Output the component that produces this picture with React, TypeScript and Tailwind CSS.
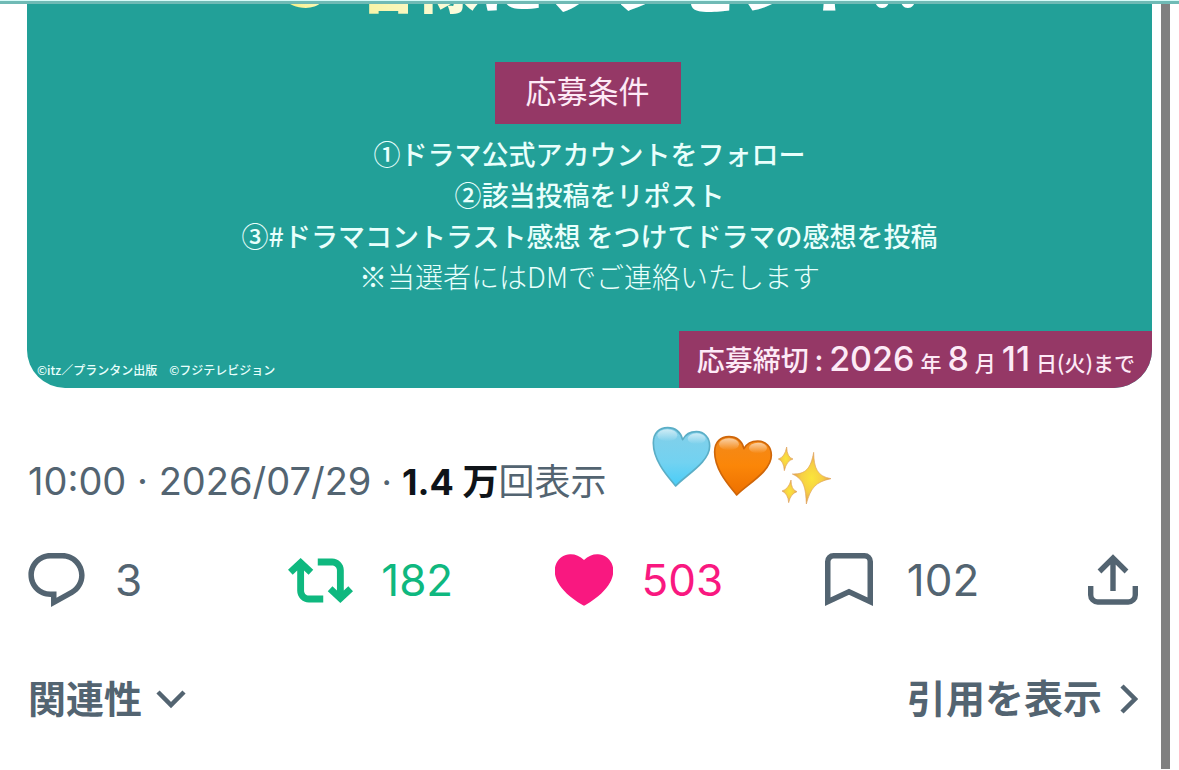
import { clsx } from "clsx";
import type { ReactNode } from "react";

const conditions = [
  "①ドラマ公式アカウントをフォロー",
  "②該当投稿をリポスト",
  "③#ドラマコントラスト感想 をつけてドラマの感想を投稿",
];

function ReplyIcon() {
  return (
    <svg viewBox="1.75 2 20.5 19.7" className="mr-0.5 h-[54px] w-[57px]" fill="currentColor" aria-hidden={true}>
      <path d="M1.751 10c0-4.42 3.584-8 8.005-8h4.366c4.49 0 8.129 3.64 8.129 8.13 0 2.96-1.607 5.68-4.196 7.11l-8.054 4.46v-3.69h-.067c-4.49.1-8.183-3.51-8.183-8.01zm8.005-6c-3.317 0-6.005 2.69-6.005 6 0 3.37 2.77 6.08 6.138 6.01l.351-.01h1.761v2.3l5.087-2.81c1.951-1.08 3.163-3.13 3.163-5.36 0-3.39-2.744-6.13-6.129-6.13H9.756z" />
    </svg>
  );
}

function RepostIcon() {
  return (
    <svg viewBox="0.15 3.79 23.7 16.42" className="h-[45px] w-[65px]" fill="currentColor" aria-hidden={true}>
      <path d="M4.75 3.79l4.603 4.3-1.706 1.82L6 8.38v7.37c0 .97.784 1.75 1.75 1.75H13V20H7.75c-2.347 0-4.25-1.9-4.25-4.25V8.38L1.853 9.91.147 8.09l4.603-4.3zm11.5 2.71H11V4h5.25c2.347 0 4.25 1.9 4.25 4.25v7.37l1.647-1.53 1.706 1.82-4.603 4.3-4.603-4.3 1.706-1.82L18 15.62V8.25c0-.97-.784-1.75-1.75-1.75z" />
    </svg>
  );
}

function LikeIcon() {
  return (
    <svg viewBox="2.1 3.5 19.8 17.66" className="h-[52px] w-[58px]" fill="currentColor" aria-hidden={true}>
      <path d="M20.884 13.19c-1.351 2.48-4.001 5.12-8.379 7.67l-.503.3-.504-.3c-4.379-2.55-7.029-5.19-8.382-7.67-1.36-2.5-1.41-4.86-.514-6.67.887-1.79 2.647-2.91 4.601-3.01 1.651-.09 3.368.56 4.798 2.01 1.429-1.45 3.146-2.1 4.796-2.01 1.954.1 3.714 1.22 4.601 3.01.896 1.81.846 4.17-.514 6.67z" />
    </svg>
  );
}

function BookmarkIcon() {
  return (
    <svg viewBox="0 0 48 54" className="mr-1.5 h-[54px] w-12" fill="none" stroke="currentColor" strokeWidth="5.5" aria-hidden={true}>
      <path d="M2.75 48.7V8.5a5.75 5.75 0 0 1 5.75-5.75h31a5.75 5.75 0 0 1 5.75 5.75v40.2L24 38.8z" />
    </svg>
  );
}

function ShareIcon() {
  return (
    <svg viewBox="0 0 50 52" className="h-[52px] w-[50px]" fill="none" stroke="currentColor" strokeWidth="5.4" aria-hidden={true}>
      <path d="M2.7 32v9a7 7 0 0 0 7 7h30.6a7 7 0 0 0 7-7v-9M25 37V4M11.500 17.500 25 4l13.500 13.500" />
    </svg>
  );
}

function HeartsAndSparkles() {
  return (
    <svg viewBox="0 0 600 285" className="h-[95px] w-[200px] shrink-0" role="img" aria-label="🩵🧡✨">
      <defs>
        <linearGradient id="blueHeart" x1="0" y1="0" x2="0" y2="1">
          <stop offset="0" stopColor="#84cfe8" />
          <stop offset="0.6" stopColor="#72d2f1" />
          <stop offset="1" stopColor="#48cdf8" />
        </linearGradient>
        <linearGradient id="orangeHeart" x1="0" y1="0" x2="0" y2="1">
          <stop offset="0" stopColor="#f28a1c" />
          <stop offset="0.5" stopColor="#fb8608" />
          <stop offset="1" stopColor="#ed7000" />
        </linearGradient>
        <linearGradient id="shine" x1="0" y1="0" x2="0" y2="1">
          <stop offset="0" stopColor="#fff" stopOpacity="0.6" />
          <stop offset="1" stopColor="#fff" stopOpacity="0" />
        </linearGradient>
        <radialGradient id="sparkle">
          <stop offset="0" stopColor="#fbe53a" />
          <stop offset="0.55" stopColor="#f6cf45" />
          <stop offset="1" stopColor="#e2a050" />
        </radialGradient>
      </defs>
      <g strokeWidth="5" strokeLinejoin="round">
        <path d="M107 213C86 187 40 139 40 84C40 53 59 38 83 38C107 38 122 52 128 74C136 59 151 50 169 50C193 50 209 68 209 93C209 142 136 181 107 213Z" fill="url(#blueHeart)" stroke="#5baec6" />
        <path d="M290 240C270 214 224 166 224 111C224 80 243 65 267 65C291 65 306 79 312 101C320 86 335 78 353 78C378 78 394 96 394 121C394 170 320 208 290 240Z" fill="url(#orangeHeart)" stroke="#cf6609" />
      </g>
      <g fill="url(#shine)">
        <ellipse cx="82" cy="61" rx="30" ry="18" />
        <ellipse cx="170" cy="71" rx="27" ry="16" />
        <ellipse cx="267" cy="88" rx="30" ry="18" />
        <ellipse cx="354" cy="99" rx="27" ry="16" />
      </g>
      <g fill="url(#sparkle)" stroke="#dfa35c" strokeWidth="2" strokeLinejoin="round">
        <path d="M440 96Q441 127 459 132Q440 137 433 167Q431 138 415 132Q434 127 440 96Z" />
        <path d="M453 195Q453 224 471 230Q452 236 446 263Q444 236 426 228Q446 222 453 195Z" />
        <path d="M521 112C522 160 532 184 573 191C525 201 512 220 499 267C497 219 493 193 457 177C498 178 512 160 521 112Z" />
      </g>
    </svg>
  );
}

function Action({
  label,
  count,
  className,
  children,
}: {
  label: string;
  count?: string;
  className?: string;
  children: ReactNode;
}) {
  return (
    <button
      type="button"
      aria-label={count ? `${label} ${count}` : label}
      className={clsx("flex h-14 items-center gap-7 text-[44px] leading-none", className)}
    >
      {children}
      {count && <span>{count}</span>}
    </button>
  );
}

function CampaignCard() {
  return (
    <section className="flex flex-col overflow-hidden rounded-b-[38px] bg-[#22a098] font-['Noto_Sans_CJK_JP',sans-serif] text-[#e9fffc]">
      <div className="flex h-[17px] items-end justify-center overflow-hidden pl-6">
        <p className="whitespace-nowrap text-[65px] font-black leading-[84px] text-white">
          <span className="mr-4 bg-linear-to-r from-[#f5ee7c] to-[#fdfbc8] bg-clip-text text-[84px] text-transparent">
            5
          </span>
          <span className="bg-linear-to-r from-[#f7f29a] to-[#fdfde8] bg-clip-text text-transparent">
            名様
          </span>
          にプレゼント!!
        </p>
      </div>
      <h2 className="mr-1 mt-[41px] self-center bg-[#953866] px-[31px] pb-[6px] text-[31px] leading-[56px] text-[#fdeaf6]">
        応募条件
      </h2>
      <div className="mt-[9px] text-center text-[27px] font-medium leading-[41px]">
        {conditions.map((line) => (
          <p key={line}>{line}</p>
        ))}
        <p className="text-[28px] font-light">
          ※当選者にはDMでご連絡いたします
        </p>
      </div>
      <div className="mt-[34px] flex items-end justify-between">
        <small className="pb-2 pl-[10px] text-[12px] font-medium leading-5">
          ©itz／プランタン出版　©フジテレビジョン
        </small>
        <p className="flex h-[57px] items-baseline gap-[6px] bg-[#953866] pl-[18px] pr-[17px] text-[21px] font-medium leading-[56px] text-[#fdeaf6]">
          <span className="text-[28px]">応募締切</span>
          <span className="text-[28px]">:</span>
          <span className="font-['Inter',sans-serif] text-[34px]">2026</span>
          <span>年</span>
          <span className="font-['Inter',sans-serif] text-[34px]">8</span>
          <span>月</span>
          <span className="font-['Inter',sans-serif] text-[34px]">11</span>
          <span>日(火)まで</span>
        </p>
      </div>
    </section>
  );
}

export default function App() {
  return (
    <div className="flex min-h-screen flex-col bg-white font-['Inter','Noto_Sans_CJK_JP',sans-serif] text-[#536471]">
      <div className="h-1 border-t border-[#d5fbf8] bg-[#6fbab5]" />
      <div className="flex flex-1 pr-[9px]">
        <main className="min-w-0 flex-1 pl-[27px] pr-[9px]">
          <CampaignCard />

          <div className="mt-[27px] flex items-end">
            <p className="whitespace-nowrap pb-1 pl-px text-[36px] leading-[48px]">
              <time dateTime="2026-07-29T10:00" className="text-[38px]">
                10:00 · 2026/07/29
              </time>{" "}
              · <strong className="font-bold text-[#0f1419]">1.4 万</strong>
              回表示
            </p>
            <div className="ml-[34px]">
              <HeartsAndSparkles />
            </div>
          </div>

          <div className="mr-[14px] mt-[42px] grid grid-cols-[260fr_267fr_269fr_263fr_50px] pl-px">
            <Action label="返信" count="3">
              <ReplyIcon />
            </Action>
            <Action label="リポスト" count="182" className="text-[#0fb87f]">
              <RepostIcon />
            </Action>
            <Action label="いいね" count="503" className="text-[#f91880]">
              <LikeIcon />
            </Action>
            <Action label="ブックマーク" count="102">
              <BookmarkIcon />
            </Action>
            <Action label="共有">
              <ShareIcon />
            </Action>
          </div>

          <div className="mr-[14px] mt-[63px] flex items-center justify-between pl-px text-[38px] font-bold leading-[56px]">
            <button type="button" className="flex items-center gap-[14px]">
              関連性
              <svg viewBox="0 0 30 20" className="h-5 w-[30px]" fill="none" stroke="currentColor" strokeWidth="4.500" aria-hidden={true}>
                <path d="M2 3l13 13L28 3" />
              </svg>
            </button>
            <a href="#quotes" className="flex items-center gap-[18px] text-[39px]">
              引用を表示
              <svg viewBox="0 0 18 30" className="h-[30px] w-[18px]" fill="none" stroke="currentColor" strokeWidth="4.500" aria-hidden={true}>
                <path d="M2 2l13 13L2 28" />
              </svg>
            </a>
          </div>
        </main>
        <div className="mb-px w-[9px] bg-[#808080]" />
      </div>
    </div>
  );
}
